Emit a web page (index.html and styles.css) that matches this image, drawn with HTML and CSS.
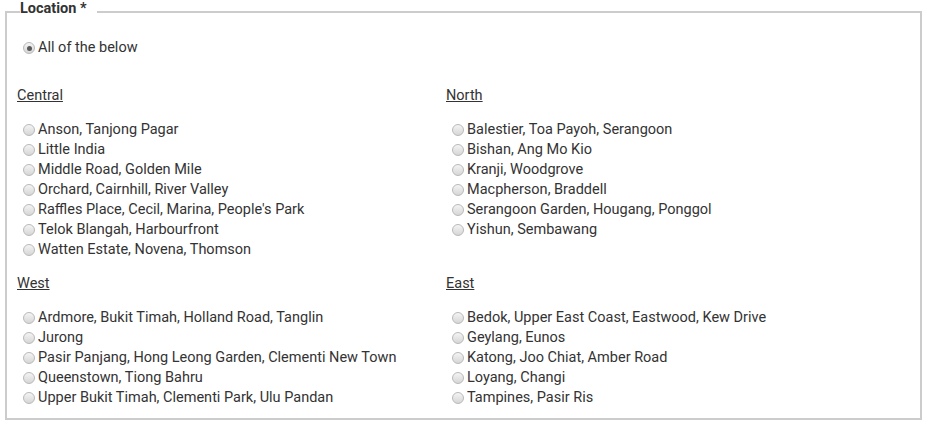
FILE: index.html
```html
<!DOCTYPE html>
<html>
<head>
<meta charset="utf-8">
<link rel="stylesheet" href="styles.css">
</head>
<body>
<fieldset class="location">
  <legend class="legend">Location *</legend>
  <div class="all">
    <label class="option"><span class="radio checked"></span>All of the below</label>
  </div>
  <div class="grid">
    <div class="group">
      <div class="heading">Central</div>
      <ul class="list">
        <li class="option"><span class="radio"></span>Anson, Tanjong Pagar</li>
        <li class="option"><span class="radio"></span>Little India</li>
        <li class="option"><span class="radio"></span>Middle Road, Golden Mile</li>
        <li class="option"><span class="radio"></span>Orchard, Cairnhill, River Valley</li>
        <li class="option"><span class="radio"></span>Raffles Place, Cecil, Marina, People's Park</li>
        <li class="option"><span class="radio"></span>Telok Blangah, Harbourfront</li>
        <li class="option"><span class="radio"></span>Watten Estate, Novena, Thomson</li>
      </ul>
    </div>
    <div class="group">
      <div class="heading">North</div>
      <ul class="list">
        <li class="option"><span class="radio"></span>Balestier, Toa Payoh, Serangoon</li>
        <li class="option"><span class="radio"></span>Bishan, Ang Mo Kio</li>
        <li class="option"><span class="radio"></span>Kranji, Woodgrove</li>
        <li class="option"><span class="radio"></span>Macpherson, Braddell</li>
        <li class="option"><span class="radio"></span>Serangoon Garden, Hougang, Ponggol</li>
        <li class="option"><span class="radio"></span>Yishun, Sembawang</li>
      </ul>
    </div>
    <div class="group">
      <div class="heading">West</div>
      <ul class="list">
        <li class="option"><span class="radio"></span>Ardmore, Bukit Timah, Holland Road, Tanglin</li>
        <li class="option"><span class="radio"></span>Jurong</li>
        <li class="option"><span class="radio"></span>Pasir Panjang, Hong Leong Garden, Clementi New Town</li>
        <li class="option"><span class="radio"></span>Queenstown, Tiong Bahru</li>
        <li class="option"><span class="radio"></span>Upper Bukit Timah, Clementi Park, Ulu Pandan</li>
      </ul>
    </div>
    <div class="group">
      <div class="heading">East</div>
      <ul class="list">
        <li class="option"><span class="radio"></span>Bedok, Upper East Coast, Eastwood, Kew Drive</li>
        <li class="option"><span class="radio"></span>Geylang, Eunos</li>
        <li class="option"><span class="radio"></span>Katong, Joo Chiat, Amber Road</li>
        <li class="option"><span class="radio"></span>Loyang, Changi</li>
        <li class="option"><span class="radio"></span>Tampines, Pasir Ris</li>
      </ul>
    </div>
  </div>
</fieldset>
</body>
</html>
```
FILE: styles.css
```css
html, body {
  margin: 0;
  padding: 0;
  background: #fff;
}
body {
  padding: 0 5px 4px 5px;
  font-family: Roboto, "Liberation Sans", sans-serif;
  font-size: 14.5px;
  color: #333;
}
.location {
  margin: 0;
  border: 2px solid #ccc;
  padding: 0 10px 10px 10px;
  min-width: 0;
}
.legend {
  margin-left: 3px;
  padding: 0 10px 6px 0;
  font-weight: bold;
  font-size: 14.5px;
  line-height: 18px;
  color: #333;
}
.all {
  padding-top: 14px;
  padding-left: 6px;
}
.grid {
  display: grid;
  grid-template-columns: 429px 1fr;
  row-gap: 14px;
  margin-top: 28px;
}
.heading {
  line-height: 20px;
  text-decoration: underline;
  margin-bottom: 14px;
}
.list {
  list-style: none;
  margin: 0;
  padding: 0 0 0 6px;
}
.option {
  display: flex;
  align-items: center;
  line-height: 20px;
  height: 20px;
  white-space: nowrap;
}
.radio {
  flex: none;
  box-sizing: border-box;
  width: 12px;
  height: 12px;
  margin-right: 3px;
  border-radius: 50%;
  border: 1px solid #b9b9b9;
  background: linear-gradient(#f4f4f4, #d6d6d6);
  position: relative;
}
.radio.checked::after {
  content: "";
  position: absolute;
  left: 2.5px;
  top: 2.5px;
  width: 5px;
  height: 5px;
  border-radius: 50%;
  background: #5a5a5a;
}
```
